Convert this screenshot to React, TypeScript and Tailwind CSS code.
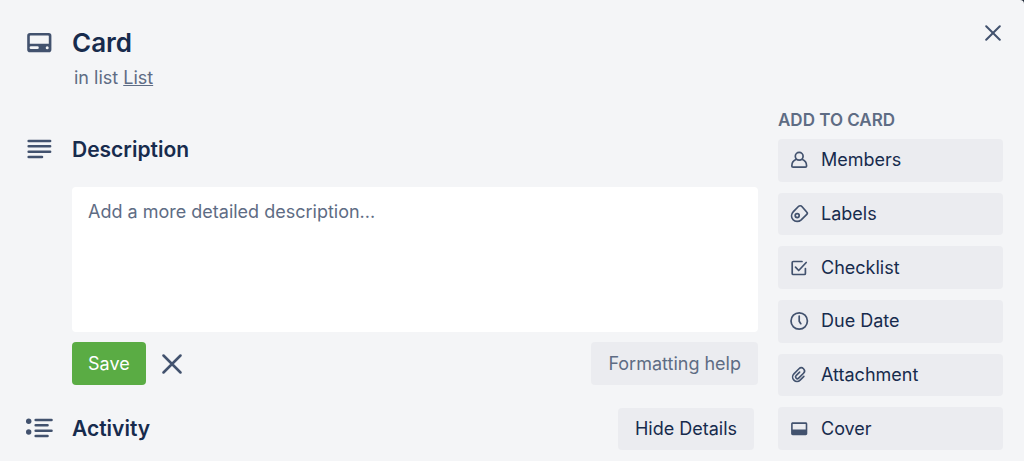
import React, { useState } from 'react';

interface IconProps {
    className?: string;
}

interface SidebarAction {
    label: string;
    icon: React.FC;
}

const CardIcon: React.FC = () => (
    <svg width="28" height="28" viewBox="0 0 28 28" fill="none" aria-hidden="true">
        <path
            fillRule="evenodd"
            clipRule="evenodd"
            d="M5 4h18.400A2.800 2.800 0 0 1 26.400 6.800v13.600A2.800 2.800 0 0 1 23.400 23.200H5A2.800 2.800 0 0 1 2.200 20.400V6.800A2.800 2.800 0 0 1 5 4ZM5.400 6.500c-.3 0-.6.300-.6.600v7.700h19V7.100c0-.3-.3-.6-.6-.6H5.400ZM6 17.300a1.400 1.400 0 0 0 0 2.800h6.400a1.400 1.400 0 0 0 0-2.800H6ZM22.200 17.200a1.500 1.500 0 1 0 0 3 1.500 1.500 0 0 0 0-3Z"
            fill="currentColor"
        />
    </svg>
);

const DescriptionIcon: React.FC = () => (
    <svg width="28" height="28" viewBox="0 0 28 28" fill="none" stroke="currentColor" strokeWidth="2.600" strokeLinecap="round" aria-hidden="true">
        <path d="M3.700 5h21.400M3.700 10.300h21.400M3.700 15.700h21.400M3.700 21h13.300" />
    </svg>
);

const ActivityIcon: React.FC = () => (
    <svg width="28" height="28" viewBox="0 0 28 28" fill="none" stroke="currentColor" strokeWidth="2.600" strokeLinecap="round" aria-hidden="true">
        <path d="M10.700 5h15.800M10.700 10.300h11.800M10.700 15.700h15.800M10.700 21h11.800" />
        <circle cx="3.700" cy="6.300" r="2.700" fill="currentColor" stroke="none" />
        <circle cx="3.700" cy="17" r="2.700" fill="currentColor" stroke="none" />
    </svg>
);

const CloseIcon: React.FC<IconProps> = ({ className }) => (
    <svg className={className} viewBox="0 0 20 20" fill="none" stroke="currentColor" strokeWidth="2.500" strokeLinecap="round" aria-hidden="true">
        <path d="M1.500 1.500l17 17M18.500 1.500l-17 17" />
    </svg>
);

const MemberIcon: React.FC = () => (
    <svg width="20" height="20" viewBox="0 0 20 20" fill="none" stroke="currentColor" strokeWidth="1.700" strokeLinejoin="round" aria-hidden="true">
        <circle cx="10.200" cy="6.300" r="3.900" />
        <path d="M7.400 9.300C4.500 10.300 2.800 12.800 2.800 15.900c0 .8.500 1.300 1.300 1.300h12.200c.8 0 1.300-.5 1.300-1.300 0-3.100-1.700-5.600-4.600-6.600" />
    </svg>
);

const LabelIcon: React.FC = () => (
    <svg width="20" height="20" viewBox="0 0 20 20" fill="none" stroke="currentColor" strokeWidth="1.700" strokeLinejoin="round" aria-hidden="true">
        <path d="M9.400 2.500 4.400 7.600c-2.400 2.500-2.300 5.900-.3 8.100 2.100 2.300 5.700 2.300 8.100.1l5.600-5.500c.6-.6.700-1.400.1-2l-4.800-5.600c-1-1.200-2.600-1.300-3.700-.2Z" />
        <circle cx="8.200" cy="11.600" r="2" />
    </svg>
);

const ChecklistIcon: React.FC = () => (
    <svg width="20" height="20" viewBox="0 0 20 20" fill="none" stroke="currentColor" strokeWidth="1.700" strokeLinecap="round" strokeLinejoin="round" aria-hidden="true">
        <path d="M13 3.500H4.300c-.7 0-1.100.4-1.100 1.100v10.800c0 .7.400 1.100 1.100 1.100h11c.7 0 1.100-.4 1.100-1.100V10.500" />
        <path d="M6.500 9.200l3.200 3.300 7.500-8" />
    </svg>
);

const ClockIcon: React.FC = () => (
    <svg width="20" height="20" viewBox="0 0 20 20" fill="none" stroke="currentColor" strokeWidth="1.700" strokeLinecap="round" strokeLinejoin="round" aria-hidden="true">
        <circle cx="10.200" cy="10" r="8.200" />
        <path d="M10.200 5v5.300l1.600 2.400" />
    </svg>
);

const AttachmentIcon: React.FC = () => (
    <svg width="20" height="20" viewBox="0 0 20 20" fill="none" stroke="currentColor" strokeWidth="1.600" strokeLinecap="round" strokeLinejoin="round" aria-hidden="true">
        <path
            transform="rotate(45 10 10)"
            d="M14.400 7.500v5.300a4.400 4.400 0 0 1-8.800 0V5.600a3.200 3.200 0 0 1 6.400 0v6.900a1.800 1.800 0 0 1-3.600 0V7.500"
        />
    </svg>
);

const CoverIcon: React.FC = () => (
    <svg width="20" height="20" viewBox="0 0 20 20" fill="none" aria-hidden="true">
        <path
            fillRule="evenodd"
            clipRule="evenodd"
            d="M3.700 3.300h13c.9 0 1.600.7 1.600 1.600v9.700c0 .9-.7 1.600-1.600 1.600h-13c-.9 0-1.600-.7-1.600-1.600V4.900c0-.9.700-1.600 1.600-1.600Zm0 1.600v5.600h13V4.900h-13Z"
            fill="currentColor"
        />
    </svg>
);

const actions: SidebarAction[] = [
    { label: 'Members', icon: MemberIcon },
    { label: 'Labels', icon: LabelIcon },
    { label: 'Checklist', icon: ChecklistIcon },
    { label: 'Due Date', icon: ClockIcon },
    { label: 'Attachment', icon: AttachmentIcon },
    { label: 'Cover', icon: CoverIcon },
];

const App: React.FC = () => {
    const [description, setDescription] = useState('');

    return (
        <div className="bg-[#1f2937]">
            <div className="min-h-screen rounded-tr-[4px] bg-[#f4f5f7] pt-[27px] pr-[21px] pb-[10px] pl-[25px] font-['Inter',sans-serif] text-lg text-[#172b4d]">
                {/* card title */}
                <header className="flex items-start">
                    <span className="flex h-8 w-[47px] shrink-0 items-center text-[#42526e]">
                        <CardIcon />
                    </span>
                    <div className="flex-1">
                        <h1 className="text-[26px] leading-8 font-semibold">Card</h1>
                        <p className="mt-[7px] pl-0.5 leading-6 text-[#5e6c84]">
                            in list <a href="#list" className="underline">List</a>
                        </p>
                    </div>
                    <button type="button" aria-label="Close card" className="mt-[-4px] flex h-5 w-5 items-center justify-center text-[#42526e]">
                        <CloseIcon className="h-4 w-4" />
                    </button>
                </header>

                <div className="mt-[18px] flex gap-5">
                    <main className="min-w-0 flex-1">
                        {/* description */}
                        <section className="mt-7">
                            <div className="flex items-center">
                                <span className="w-[47px] shrink-0 text-[#42526e]">
                                    <DescriptionIcon />
                                </span>
                                <h2 className="text-[21px] leading-7 font-semibold">
                                    <label htmlFor="description">Description</label>
                                </h2>
                            </div>
                            <div className="mt-[23px] pl-[47px]">
                                <textarea
                                    id="description"
                                    value={description}
                                    onChange={(e) => setDescription(e.target.value)}
                                    placeholder="Add a more detailed description..."
                                    className="block h-[145px] w-full resize-none rounded-[4px] bg-white px-4 py-[13px] leading-6 placeholder:text-[#5e6c84]"
                                />
                                <div className="mt-2.5 flex items-center">
                                    <button type="button" className="h-[43px] rounded-[4px] bg-[#5aac44] px-4 text-white">
                                        Save
                                    </button>
                                    <button type="button" aria-label="Cancel" className="ml-4 text-[#42526e]">
                                        <CloseIcon className="h-5 w-5" />
                                    </button>
                                    <button type="button" className="ml-auto h-[43px] rounded-[4px] bg-[#ebecf0] px-[17px] text-[#5e6c84]">
                                        Formatting help
                                    </button>
                                </div>
                            </div>
                        </section>

                        {/* activity */}
                        <section className="mt-[23px] flex items-center pr-1">
                            <span className="w-[47px] shrink-0 text-[#42526e]">
                                <ActivityIcon />
                            </span>
                            <h2 className="text-[21px] leading-7 font-semibold">Activity</h2>
                            <button type="button" className="ml-auto h-[42px] rounded-[4px] bg-[#ebecf0] px-[17px]">
                                Hide Details
                            </button>
                        </section>
                    </main>

                    {/* sidebar, rows share the height of the main column */}
                    <aside className="flex w-[225px] shrink-0 flex-col">
                        <h3 className="text-[17px] leading-6 font-semibold text-[#5e6c84] uppercase">Add to card</h3>
                        <ul className="mt-[7px] grid flex-1 auto-rows-fr gap-[11px]">
                            {actions.map(({ label, icon: Icon }) => (
                                <li key={label} className="flex">
                                    <button type="button" className="flex flex-1 items-center gap-3 rounded-[4px] bg-[#ebecf0] px-[11px] text-left">
                                        <span className="text-[#42526e]">
                                            <Icon />
                                        </span>
                                        {label}
                                    </button>
                                </li>
                            ))}
                        </ul>
                    </aside>
                </div>
            </div>
        </div>
    );
};

export default App;
